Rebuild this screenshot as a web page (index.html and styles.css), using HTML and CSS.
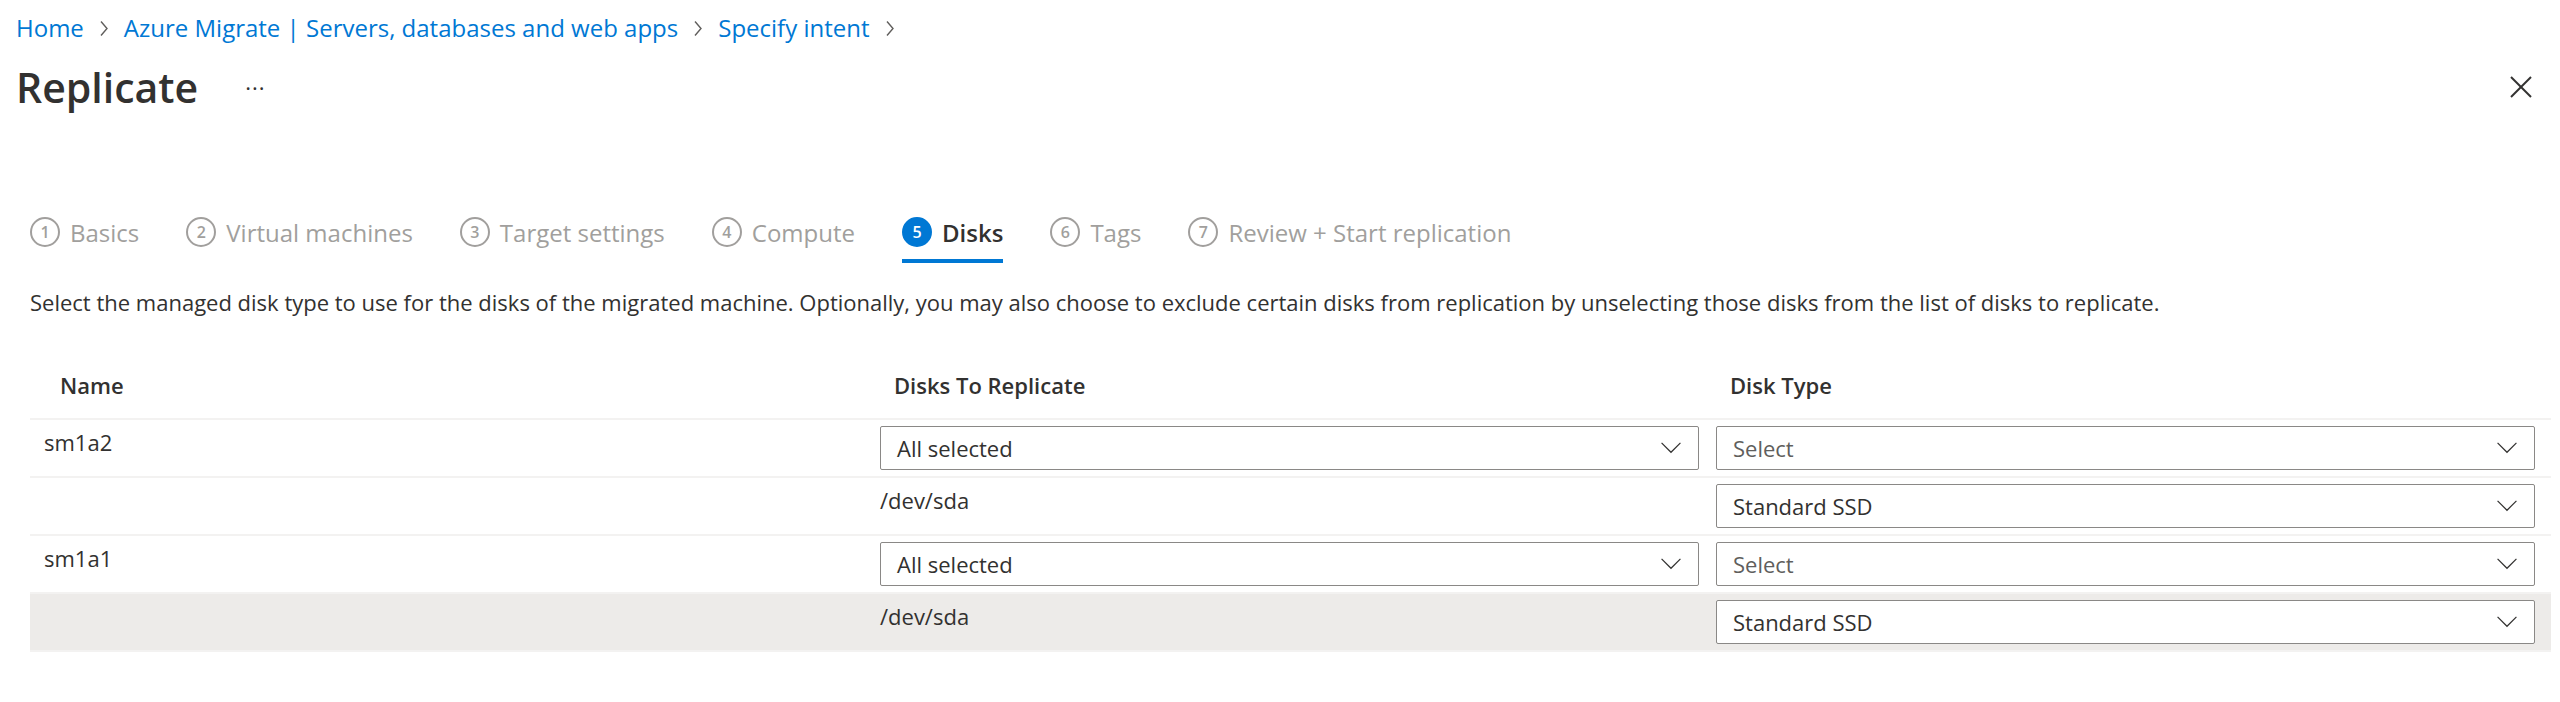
FILE: index.html
```html
<!DOCTYPE html>
<html lang="en">
<head>
<meta charset="utf-8">
<title>Replicate</title>
<link rel="stylesheet" href="styles.css">
</head>
<body>
<div class="page">
  <nav class="breadcrumb">
    <a class="crumb">Home</a>
    <svg class="crumb-sep" viewBox="0 0 10 16"><polyline points="2,1 8,8 2,15"/></svg>
    <a class="crumb">Azure Migrate | Servers, databases and web apps</a>
    <svg class="crumb-sep" viewBox="0 0 10 16"><polyline points="2,1 8,8 2,15"/></svg>
    <a class="crumb">Specify intent</a>
    <svg class="crumb-sep" viewBox="0 0 10 16"><polyline points="2,1 8,8 2,15"/></svg>
  </nav>

  <header class="title-row">
    <h1 class="title">Replicate</h1>
    <span class="more">···</span>
    <span class="spacer"></span>
    <svg class="close" viewBox="0 0 22 22"><line x1="1" y1="1" x2="21" y2="21"/><line x1="21" y1="1" x2="1" y2="21"/></svg>
  </header>

  <div class="content">
    <div class="tabs">
      <div class="tab"><span class="num">1</span><span class="tab-label">Basics</span></div>
      <div class="tab"><span class="num">2</span><span class="tab-label">Virtual machines</span></div>
      <div class="tab"><span class="num">3</span><span class="tab-label">Target settings</span></div>
      <div class="tab"><span class="num">4</span><span class="tab-label">Compute</span></div>
      <div class="tab active"><span class="num">5</span><span class="tab-label">Disks</span></div>
      <div class="tab"><span class="num">6</span><span class="tab-label">Tags</span></div>
      <div class="tab"><span class="num">7</span><span class="tab-label">Review + Start replication</span></div>
    </div>

    <p class="desc">Select the managed disk type to use for the disks of the migrated machine. Optionally, you may also choose to exclude certain disks from replication by unselecting those disks from the list of disks to replicate.</p>

    <div class="grid">
      <div class="row head">
        <div class="cell">Name</div>
        <div class="cell">Disks To Replicate</div>
        <div class="cell">Disk Type</div>
      </div>

      <div class="row">
        <div class="cell text">sm1a2</div>
        <div class="cell"><div class="dropdown"><span>All selected</span><svg class="chev" viewBox="0 0 24 14"><polyline points="1,1 12,12 23,1"/></svg></div></div>
        <div class="cell"><div class="dropdown placeholder"><span>Select</span><svg class="chev" viewBox="0 0 24 14"><polyline points="1,1 12,12 23,1"/></svg></div></div>
      </div>

      <div class="row">
        <div class="cell text"></div>
        <div class="cell text">/dev/sda</div>
        <div class="cell"><div class="dropdown"><span>Standard SSD</span><svg class="chev" viewBox="0 0 24 14"><polyline points="1,1 12,12 23,1"/></svg></div></div>
      </div>

      <div class="row">
        <div class="cell text">sm1a1</div>
        <div class="cell"><div class="dropdown"><span>All selected</span><svg class="chev" viewBox="0 0 24 14"><polyline points="1,1 12,12 23,1"/></svg></div></div>
        <div class="cell"><div class="dropdown placeholder"><span>Select</span><svg class="chev" viewBox="0 0 24 14"><polyline points="1,1 12,12 23,1"/></svg></div></div>
      </div>

      <div class="row hover">
        <div class="cell text"></div>
        <div class="cell text">/dev/sda</div>
        <div class="cell"><div class="dropdown"><span>Standard SSD</span><svg class="chev" viewBox="0 0 24 14"><polyline points="1,1 12,12 23,1"/></svg></div></div>
      </div>
    </div>
  </div>
</div>
</body>
</html>
```

FILE: styles.css
```css
* { box-sizing: border-box; }

html, body {
  margin: 0;
  padding: 0;
  background: #ffffff;
}

body {
  font-family: "Segoe UI", "Open Sans", sans-serif;
  color: #323130;
  font-size: 22px;
}

.page {
  width: 2560px;
  height: 702px;
  overflow: hidden;
}

/* breadcrumb */
.breadcrumb {
  display: flex;
  align-items: center;
  gap: 15px;
  padding: 13px 0 0 16px;
  height: 43px;
  font-size: 24px;
  line-height: 30px;
}

.crumb {
  color: #0078d4;
  text-decoration: none;
}

.crumb-sep {
  width: 10px;
  height: 17px;
  fill: none;
  stroke: #605e5c;
  stroke-width: 1.4;
}

/* title row */
.title-row {
  display: flex;
  align-items: center;
  height: 52px;
  margin-top: 18px;
  padding: 0 28px 0 16px;
}

.title {
  margin: 0;
  font-size: 41px;
  font-weight: 600;
  line-height: 52px;
}

.more {
  margin-left: 47px;
  font-size: 22px;
  color: #323130;
  letter-spacing: 1px;
}

.spacer { flex: 1; }

.close {
  width: 22px;
  height: 22px;
  stroke: #323130;
  stroke-width: 2;
}

/* content */
.content {
  padding: 0 9px 0 30px;
}

.tabs {
  display: flex;
  gap: 47px;
  margin-top: 99px;
  height: 51px;
}

.tab {
  display: flex;
  align-items: center;
  gap: 10px;
  height: 51px;
  padding-bottom: 7px;
  border-bottom: 4px solid transparent;
  color: #a19f9d;
  font-size: 24px;
}

.num {
  display: flex;
  align-items: center;
  justify-content: center;
  width: 30px;
  height: 30px;
  border: 2px solid #a19f9d;
  border-radius: 50%;
  font-size: 16px;
  font-weight: 600;
  color: #a19f9d;
}

.tab.active {
  color: #323130;
  border-bottom-color: #0078d4;
  font-weight: 600;
}

.tab.active .num {
  background: #0078d4;
  border-color: #0078d4;
  color: #ffffff;
}

.desc {
  margin: 24px 0 0 0;
  font-size: 22px;
  line-height: 30px;
  color: #323130;
}

/* grid table */
.grid {
  margin-top: 35px;
  width: 2521px;
}

.row {
  display: grid;
  grid-template-columns: 836px 836px 1fr;
  height: 58px;
  border-bottom: 2px solid #f3f2f1;
}

.row.head {
  height: 68px;
  font-weight: 600;
}

.row.head .cell {
  padding: 18px 0 0 28px;
  line-height: 30px;
}

.row.head .cell:first-child { padding-left: 30px; }

.row.hover {
  background: #edebe9;
}

.cell {
  padding: 6px 0 0 14px;
}

.cell.text {
  padding-top: 7px;
  line-height: 30px;
}

.dropdown {
  display: flex;
  align-items: center;
  justify-content: space-between;
  width: 819px;
  height: 44px;
  padding: 0 16px 0 16px;
  background: #ffffff;
  border: 1.5px solid #8a8886;
  border-radius: 2px;
  color: #323130;
}

.dropdown.placeholder { color: #605e5c; }

.chev {
  width: 22px;
  height: 12px;
  fill: none;
  stroke: #323130;
  stroke-width: 1.4;
}
```
